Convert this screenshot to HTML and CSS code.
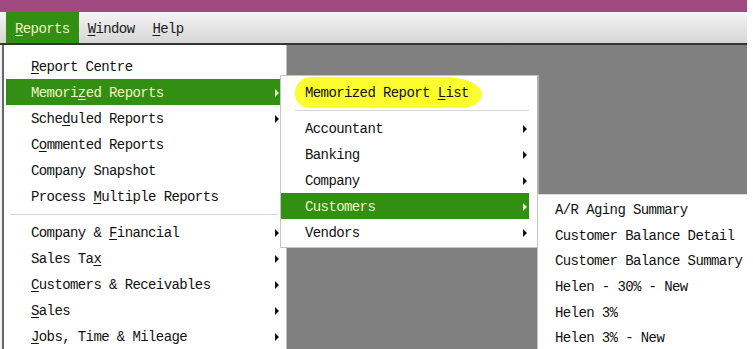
FILE: index.html
```html
<!DOCTYPE html>
<html>
<head>
<meta charset="utf-8">
<link rel="stylesheet" href="styles.css">
</head>
<body>
<div class="app">
  <div class="titlebar"></div>
  <div class="menubar">
    <div class="mb-item active"><u>R</u>eports</div>
    <div class="mb-item"><u>W</u>indow</div>
    <div class="mb-item"><u>H</u>elp</div>
  </div>
  <div class="workspace">
    <div class="menu main-menu">
      <div class="item"><span class="label"><u>R</u>eport Centre</span></div>
      <div class="item sel"><span class="label">Memori<u>z</u>ed Reports</span><span class="arrow"></span></div>
      <div class="item"><span class="label">Sche<u>d</u>uled Reports</span><span class="arrow"></span></div>
      <div class="item"><span class="label">C<u>o</u>mmented Reports</span></div>
      <div class="item"><span class="label">Company Snapshot</span></div>
      <div class="item"><span class="label">Process <u>M</u>ultiple Reports</span></div>
      <div class="sep"></div>
      <div class="item"><span class="label">Company &amp; <u>F</u>inancial</span><span class="arrow"></span></div>
      <div class="item"><span class="label">Sales Ta<u>x</u></span><span class="arrow"></span></div>
      <div class="item"><span class="label"><u>C</u>ustomers &amp; Receivables</span><span class="arrow"></span></div>
      <div class="item"><span class="label"><u>S</u>ales</span><span class="arrow"></span></div>
      <div class="item"><span class="label"><u>J</u>obs, Time &amp; Mileage</span><span class="arrow"></span></div>
    </div>
    <div class="menu sub-menu">
      <div class="item marked"><span class="marker"></span><span class="label">Memorized Report <u>L</u>ist</span></div>
      <div class="sep"></div>
      <div class="item"><span class="label">Accountant</span><span class="arrow"></span></div>
      <div class="item"><span class="label">Banking</span><span class="arrow"></span></div>
      <div class="item"><span class="label">Company</span><span class="arrow"></span></div>
      <div class="item sel"><span class="label">Customers</span><span class="arrow"></span></div>
      <div class="item"><span class="label">Vendors</span><span class="arrow"></span></div>
    </div>
    <div class="menu sub-menu2">
      <div class="item"><span class="label">A/R Aging Summary</span></div>
      <div class="item"><span class="label">Customer Balance Detail</span></div>
      <div class="item"><span class="label">Customer Balance Summary</span></div>
      <div class="item"><span class="label">Helen - 30% - New</span></div>
      <div class="item"><span class="label">Helen 3%</span></div>
      <div class="item"><span class="label">Helen 3% - New</span></div>
    </div>
  </div>
</div>
</body>
</html>
```
FILE: styles.css
```css
html, body {
  margin: 0;
  padding: 0;
  background: #ffffff;
}
body {
  font-family: "Liberation Mono", "DejaVu Sans Mono", monospace;
  font-size: 14px;
  letter-spacing: -0.6px;
  color: #111111;
}
u {
  text-decoration: underline;
  text-underline-offset: 2px;
}
.app {
  width: 747px;
  height: 349px;
  overflow: hidden;
  display: flex;
  flex-direction: column;
}
.titlebar {
  height: 12px;
  background: #a14a81;
  flex: none;
}
.menubar {
  height: 31px;
  flex: none;
  display: flex;
  align-items: stretch;
  padding-left: 6px;
  background: linear-gradient(#f6f4f6, #d6d6d6);
  border-bottom: 2px solid #353535;
}
.mb-item {
  display: flex;
  align-items: center;
  padding: 3px 9px 0 9px;
  color: #1a1a1a;
}
.mb-item.active {
  background: #338f14;
  color: #eef5c4;
}
.workspace {
  flex: 1;
  position: relative;
  background: #808080;
}
.menu {
  position: absolute;
  background: #ffffff;
  box-sizing: border-box;
}
.main-menu {
  left: 0;
  top: 0;
  width: 287px;
  height: 320px;
  border-left: 2px solid #f2f2f2;
  box-shadow: inset 2px 0 0 #666666;
  border-right: 1px solid #bdbdbd;
  padding: 8px 6px 0 4px;
}
.item {
  position: relative;
  box-sizing: border-box;
  height: 26px;
  display: flex;
  align-items: center;
  justify-content: space-between;
}
.main-menu .item {
  padding: 1px 1px 0 25px;
}
.label {
  position: relative;
  white-space: pre;
}
.item.sel {
  background: #338f14;
  color: #eef5c4;
}
.arrow {
  width: 0;
  height: 0;
  border-top: 4px solid transparent;
  border-bottom: 4px solid transparent;
  border-left: 4px solid #111111;
}
.item.sel .arrow {
  border-left-color: #e4f0d0;
}
.sep {
  height: 10px;
  display: flex;
  align-items: center;
}
.sep::before {
  content: "";
  flex: 1;
  height: 1px;
  background: #d4d4d4;
  margin: 0 2px 0 4px;
}
.sub-menu {
  left: 280px;
  top: 30px;
  width: 259px;
  border: 1px solid #c4c4c4;
  border-right: 2px solid #b0b0b0;
  padding: 3px 8px 2px 0;
}
.sub-menu .item {
  padding: 1px 2px 0 24px;
}
.sub-menu .sep::before {
  margin: 0 0 0 14px;
}
.marker {
  position: absolute;
  left: 14px;
  top: -2px;
  width: 187px;
  height: 31px;
  background: #fdfc2e;
  border-radius: 18px 40px 22px 16px / 16px 18px 15px 14px;
}
.sub-menu2 {
  left: 537px;
  top: 149px;
  width: 210px;
  height: 160px;
  border-left: 1px solid #c4c4c4;
  border-top: 1px solid #dcdcdc;
  padding: 2px 0 0 17px;
}
.sub-menu2 .item {
  height: 25.6px;
  padding-top: 1px;
}
```
